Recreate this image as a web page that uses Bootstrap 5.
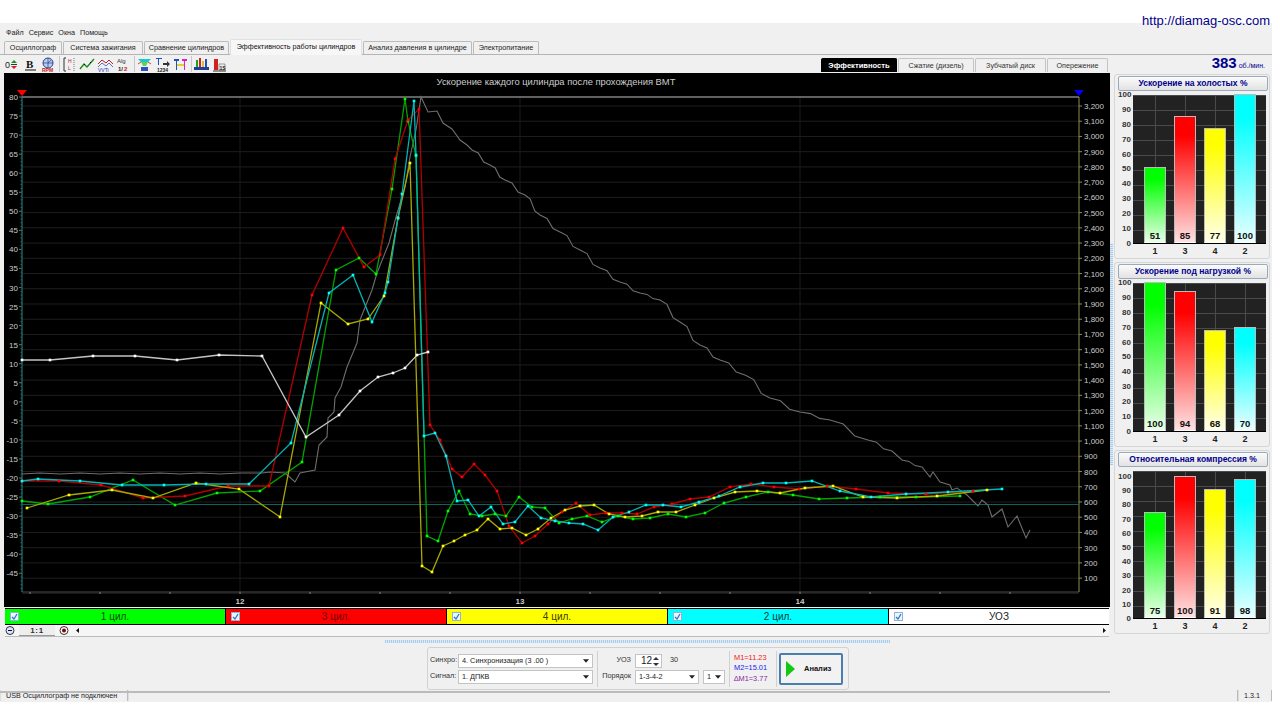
<!DOCTYPE html>
<html lang="ru">
<head>
<meta charset="UTF-8">
<title>Эффективность работы цилиндров</title>
<link href="https://cdn.jsdelivr.net/npm/bootstrap@5.3.3/dist/css/bootstrap.min.css" rel="stylesheet">
<style>
body { margin: 0; background: #fff; font-family: "Liberation Sans", Arial, sans-serif; font-size: 8px; color: #222; overflow: hidden; }
.app-frame { position: relative; width: 1272px; height: 679px; margin-top: 23px; background: #f0f0f0; }
.site-url { position: absolute; right: 2px; top: -10px; font-size: 13px; line-height: 16px; color: #00008b; text-decoration: none; }
.menu-row { height: 18px; padding: 5px 0 0 6px; font-size: 7.2px; line-height: 9px; gap: 5px; }
.app-tabs { height: 13px; padding-left: 4px; border: 0; gap: 1px; flex-wrap: nowrap; }
.app-tabs .nav-link { height: 13px; margin: 0; padding: 0; font-size: 7.2px; line-height: 12px; color: #222; text-align: center; white-space: nowrap; background: #f0f0f0; border: 1px solid #bbb; border-bottom: 0; border-radius: 2px 2px 0 0; }
.app-tabs .nav-link.active { height: 16px; margin-top: -2px; background: #f7f7f7; color: #111; line-height: 13px; position: relative; z-index: 1; }
.tool-row { height: 19px; border-top: 1px solid #b4b4b4; padding-left: 4px; }
.tool-ico { width: 17px; height: 17px; margin: 1px 1px 0 0; flex: none; }
.tool-gap { width: 1px; height: 16px; margin: 1px 1px; background: #c8c8c8; flex: none; }
.sub-tabs { position: absolute; left: 821px; top: 35px; gap: 1px; }
.sub-tab { height: 14px; font-size: 7.2px; line-height: 14px; text-align: center; background: #f0f0f0; border: 1px solid #c4c4c4; border-bottom: 0; border-radius: 2px 2px 0 0; color: #333; }
.sub-tab.on { background: #000; color: #fff; font-weight: 700; font-size: 7.6px; border-color: #000; }
.rpm-box { position: absolute; right: 7px; top: 31px; color: #00008b; font-size: 7px; line-height: 18px; white-space: nowrap; }
.rpm-box b { font-size: 15px; }
.work-row { height: 616px; }
.left-col { width: 1110px; padding-left: 4px; flex: none; }
.osc-box { height: 534px; background: #000; }
.osc-box svg { display: block; }
.osc-box text { font-family: "Liberation Sans", Arial, sans-serif; }
.legend-row { height: 17px; margin-top: 1px; margin-left: 1px; width: 1104px; gap: 1px; background: #000; }
.legend-cell { flex: 1 1 0; position: relative; height: 15px; margin-top: 1px; font-size: 10px; line-height: 15px; text-align: center; }
.legend-check { position: absolute; left: 5px; top: 3px; width: 9px; height: 9px; background: #eef5fc; border: 1px solid #8fb3d5; }
.legend-check svg { display: block; }
.scroll-row { height: 12px; background: #f6f6f6; border-bottom: 1px solid #bbb; margin-left: 1px; width: 1104px; }
.scale-btn { width: 10px; height: 11px; flex: none; }
.scale-val { width: 36px; font-size: 8px; line-height: 12px; text-align: center; font-weight: 700; background: #eee; border-bottom: 1px solid #999; color: #333; letter-spacing: .6px; }
.bottom-zone { height: 53px; position: relative; margin-left: -4px; border-bottom: 2px solid #bbb; }
.h-split { height: 3px; width: 505px; margin: 3px auto 0 385px; background: repeating-linear-gradient(90deg, #a9cbea 0 1px, #dcebf8 1px 2px); border: 0; }
.ctl-box { position: absolute; left: 427px; top: 7px; width: 422px; height: 43px; border: 1px solid #d2d2d2; border-radius: 3px; background: #f0f0f0; font-size: 7.3px; }
.ctl-label { color: #333; text-align: right; white-space: nowrap; }
.ctl-sel { height: 14px; padding: 0 12px 0 3px; font-size: 7.3px; line-height: 12px; border: 1px solid #c4c4c4; border-radius: 0; color: #222; background-color: #fff; background-image: url("data:image/svg+xml,%3csvg xmlns='http://www.w3.org/2000/svg' viewBox='0 0 7 4'%3e%3cpath d='M0 0h7L3.5 4z' fill='%23222'/%3e%3c/svg%3e"); background-position: right 3px center; background-size: 6px 4px; font-family: inherit; }
.ctl-left { padding-left: 2px; }
.sel-label { width: 26px; margin-right: 2px; }
.sel-wide { width: 135px; }
.sel-second { margin-top: 2px; }
.order-label { width: 29px; }
.order-sel { width: 64px; }
.num-sel { width: 22px; }
.uoz-val { color: #333; }
.ctl-div { width: 1px; height: 36px; background: #d0d0d0; flex: none; align-self: center; }
.spin-box { width: 27px; height: 14px; border: 1px solid #c4c4c4; background: #fff; font-size: 10px; line-height: 12px; padding-left: 5px; position: relative; }
.spin-box svg { position: absolute; right: 1px; top: 1px; }
.calc-vals { font-size: 7.4px; line-height: 10.5px; width: 42px; }
.text-m1 { color: #f01818; } .text-m2 { color: #2020f0; } .text-m3 { color: #8a1ea0; }
.run-btn { width: 64px; height: 32px; margin-left: 2px; padding: 0; border: 2px solid #4a7eaf; border-radius: 2px; background: #f2f2f2; font-size: 7.5px; font-weight: 700; color: #111; }
.run-ico { flex: none; margin-right: 3px; }
.v-split { width: 3px; height: 222px; margin-top: 170px; flex: none; background: repeating-linear-gradient(0deg, #a9cbea 0 1px, #dcebf8 1px 2px); }
.side-col { width: 158px; padding-top: 1px; margin-left: 1px; }
.gauge-card { width: 156px; padding: 1px 3px 0 3px; background: #f0f0f0; border: 1px solid #d6d6d6; border-radius: 3px; margin-bottom: 3px; }
.gauge-head { height: 15px; width: 150px; font-size: 8.5px; line-height: 13px; font-weight: 700; color: #00008b; text-align: center; background: linear-gradient(#fbfbfb, #e2e2e2); border: 1px solid #9ab; border-radius: 2px; padding: 0; }
.gauge-body { margin-top: 4px; }
.gauge-scale { width: 15px; font-weight: 700; color: #333; text-align: right; padding-right: 2px; margin-top: -5px; flex: none; }
.gauge-scale span { line-height: 10px; display: block; }
.gauge-plot { width: 134px; position: relative; padding-left: 7px; align-items: flex-end; background-color: #222; background-image: linear-gradient(#4a4a4a 1px, transparent 1px), linear-gradient(90deg, #4a4a4a 1px, transparent 1px); background-size: 100% 15px, 30px 100%; background-position: 0 0, 22px 0; border-bottom: 1px solid #000; }
.gauge-col { width: 30px; text-align: center; flex: none; }
.gauge-bar { width: 22px; margin: 0 auto; border: 1px solid #bbb; border-bottom-color: #fff; position: relative; font-size: 9.5px; font-weight: 700; color: #111; }
.gauge-bar span { position: absolute; left: 0; right: 0; bottom: 1px; line-height: 11px; }
.gauge-x { padding-left: 22px; height: 14px; font-size: 9px; line-height: 15px; font-weight: 700; color: #222; }
.gauge-x span { width: 30px; text-align: center; flex: none; }
.status-row { height: 11px; margin-top: 1px; font-size: 7.2px; line-height: 11px; background: #f0f0f0; }
.status-cell { border-right: 1px solid #bbb; border-left: 1px solid #ddd; padding-left: 5px; white-space: nowrap; }
.cell-a { width: 128px; } .cell-b { width: 1110px; }
.tab-w58 { width: 58px; } .tab-w80 { width: 80px; } .tab-w85 { width: 85px; } .tab-w132 { width: 132px; } .tab-w109 { width: 109px; } .tab-w66 { width: 66px; }
.tab-w76 { width: 76px; } .tab-w71 { width: 71px; } .tab-w61 { width: 61px; }
</style>
</head>
<body>
<div class="app-frame d-flex flex-column">
    <a class="site-url" href="#">http://diamag-osc.com</a>

    <div class="menu-row d-flex"><span>Файл</span><span>Сервис</span><span>Окна</span><span>Помощь</span></div>

    <ul class="nav nav-tabs app-tabs">
        <li class="nav-item"><a class="nav-link tab-w58" href="#">Осциллограф</a></li>
        <li class="nav-item"><a class="nav-link tab-w80" href="#">Система зажигания</a></li>
        <li class="nav-item"><a class="nav-link tab-w85" href="#">Сравнение цилиндров</a></li>
        <li class="nav-item"><a class="nav-link active tab-w132" href="#">Эффективность работы цилиндров</a></li>
        <li class="nav-item"><a class="nav-link tab-w109" href="#">Анализ давления в цилиндре</a></li>
        <li class="nav-item"><a class="nav-link tab-w66" href="#">Электропитание</a></li>
    </ul>

    <div class="tool-row d-flex">
        <svg class="tool-ico" viewBox="0 0 17 17"><text x="1" y="12" font-size="9" fill="#222">0</text><path d="M7 7l3-3 3 3z" fill="#2a8a2a"/><path d="M7 8h6v1H7z" fill="#333"/><path d="M7 10l3 3 3-3z" fill="#d02020"/></svg>
        <svg class="tool-ico" viewBox="0 0 17 17"><text x="4" y="12" font-size="11" font-weight="700" font-family="Liberation Serif" fill="#111">B</text><path d="M3 14h11" stroke="#111"/></svg>
        <svg class="tool-ico" viewBox="0 0 17 17"><circle cx="8" cy="7" r="5" fill="#b8cdea" stroke="#2b3f8c"/><path d="M8 7l3-3M3 7h10M8 2v10" stroke="#2b3f8c" stroke-width=".7"/><text x="2" y="16" font-size="5" font-weight="700" fill="#c02020">RPM</text></svg>
        <span class="tool-gap"></span>
        <svg class="tool-ico" viewBox="0 0 17 17"><path d="M5 2H3v13h2" fill="none" stroke="#333"/><text x="7" y="7" font-size="5" fill="#c02020">H</text><text x="7" y="14" font-size="5" fill="#c02020">L</text><path d="M13 2v13" stroke="#777" stroke-dasharray="1 1"/></svg>
        <svg class="tool-ico" viewBox="0 0 17 17"><path d="M1 13l4-5 3 3 7-8" fill="none" stroke="#1a8a1a" stroke-width="1.4"/><path d="M5 8h1v1H5zM11 6h1v1h-1z" fill="#111"/></svg>
        <svg class="tool-ico" viewBox="0 0 17 17"><path d="M1 8l4-4 4 3 3-3 4 4" fill="none" stroke="#c02020"/><path d="M1 11l4-4 4 3 3-3 4 4" fill="none" stroke="#2030c0" stroke-width=".7"/><text x="1" y="16" font-size="5" fill="#2030c0">VVTi</text></svg>
        <svg class="tool-ico" viewBox="0 0 17 17"><text x="2" y="7" font-size="6" fill="#333">Alg</text><text x="3" y="15" font-size="6" font-weight="700" fill="#222">1/</text><text x="9" y="15" font-size="6" font-weight="700" fill="#c02020">2</text></svg>
        <span class="tool-gap"></span>
        <svg class="tool-ico" viewBox="0 0 17 17"><path d="M2 3h13l-3 3H5z" fill="#19c8c8"/><path d="M5 6h7l-2 4H7z" fill="#5ad25a"/><path d="M5 11h7v4H5z" fill="#3050c0"/><path d="M2 8l3-2M15 8l-3-2" stroke="#d04040"/></svg>
        <svg class="tool-ico" viewBox="0 0 17 17"><path d="M2 2h6v1H5v6H4V3H2z" fill="#2050c0"/><path d="M9 7h4V5l3 3-3 3V9H9z" fill="#333"/><text x="3" y="16" font-size="5" font-weight="700" fill="#222">1234</text></svg>
        <svg class="tool-ico" viewBox="0 0 17 17"><path d="M2 3h5v2H5v9H4V5H2z" fill="#2050c0"/><path d="M10 3h5v2h-2v9h-1V5h-2z" fill="#e020c0"/><path d="M5 8h7v2H5z" fill="#e8d020"/></svg>
        <span class="tool-gap"></span>
        <svg class="tool-ico" viewBox="0 0 17 17"><path d="M3 4h2v7H3z" fill="#20a020"/><path d="M6 2h2v9H6z" fill="#d02020"/><path d="M9 5h2v6H9z" fill="#e0c020"/><path d="M12 3h2v8h-2z" fill="#2050c0"/><path d="M1 11h15v3H1z" fill="#2040a0"/></svg>
        <svg class="tool-ico" viewBox="0 0 17 17"><path d="M3 3h4v11H3z" fill="#d02020"/><path d="M8 8h6v6H8z" fill="#eee" stroke="#444" stroke-width=".5"/><text x="8.5" y="13.5" font-size="5" font-weight="700" fill="#222">1S</text><path d="M2 15h13" stroke="#333"/></svg>
    </div>

    <div class="sub-tabs d-flex">
        <div class="sub-tab on tab-w76">Эффективность</div>
        <div class="sub-tab tab-w76">Сжатие (дизель)</div>
        <div class="sub-tab tab-w71">Зубчатый диск</div>
        <div class="sub-tab tab-w61">Опережение</div>
    </div>
    <div class="rpm-box"><b>383</b> об./мин.</div>

    <div class="work-row d-flex">
        <div class="left-col">
            <div class="osc-box"><svg id="oscChart" width="1106" height="534" viewBox="4 73 1106 534"></svg></div>

            <div class="legend-row d-flex" id="legendRow"></div>

            <div class="scroll-row d-flex">
                <svg class="scale-btn" viewBox="0 0 10 11"><circle cx="5" cy="5.5" r="4" fill="#dfe6f2" stroke="#333"/><path d="M3 5h4v1H3z" fill="#00008b"/></svg>
                <div class="scale-val mx-1">1:1</div>
                <svg class="scale-btn" viewBox="0 0 10 11"><circle cx="5" cy="5.5" r="4" fill="#fff" stroke="#333"/><circle cx="5" cy="5.5" r="2" fill="#8b0000"/></svg>
                <svg class="scale-btn ms-1" viewBox="0 0 10 11"><path d="M6 3v5L3 5.5z" fill="#111"/></svg>
                <div class="flex-grow-1"></div>
                <svg class="scale-btn" viewBox="0 0 10 11"><path d="M4 3v5l3-2.5z" fill="#111"/></svg>
            </div>

            <div class="bottom-zone">
                <div class="h-split"></div>
                <div class="ctl-box d-flex align-items-center">
                    <div class="d-flex flex-column ctl-left">
                        <div class="d-flex align-items-center">
                            <span class="ctl-label sel-label">Синхро:</span>
                            <select class="form-select ctl-sel sel-wide"><option>4.  Синхронизация (3 .00 )</option></select>
                        </div>
                        <div class="d-flex align-items-center sel-second">
                            <span class="ctl-label sel-label">Сигнал:</span>
                            <select class="form-select ctl-sel sel-wide"><option>1.  ДПКВ</option></select>
                        </div>
                    </div>
                    <span class="ctl-div mx-1"></span>
                    <div class="d-flex flex-column">
                        <div class="d-flex align-items-center">
                            <span class="ctl-label order-label">УОЗ</span>
                            <div class="spin-box ms-1">12<svg width="8" height="11" viewBox="0 0 8 11"><path d="M1 4l3-3 3 3zM1 7l3 3 3-3z" fill="#333"/></svg></div>
                            <span class="ms-2 uoz-val">30</span>
                        </div>
                        <div class="d-flex align-items-center sel-second">
                            <span class="ctl-label order-label">Порядок</span>
                            <select class="form-select ctl-sel order-sel ms-1"><option>1-3-4-2</option></select>
                            <select class="form-select ctl-sel num-sel ms-1"><option>1</option></select>
                        </div>
                    </div>
                    <span class="ctl-div mx-1"></span>
                    <div class="calc-vals">
                        <div class="text-m1">M1=11.23</div>
                        <div class="text-m2">M2=15.01</div>
                        <div class="text-m3">&#8710;M1=3.77</div>
                    </div>
                    <span class="ctl-div"></span>
                    <button class="btn run-btn d-flex align-items-center" type="button">
                        <svg class="run-ico" width="20" height="24" viewBox="0 0 20 24"><path d="M5 4l9 8-9 8z" fill="#12c812"/></svg>
                        <span>Анализ</span>
                    </button>
                </div>
            </div>
        </div>
        <div class="v-split"></div>
        <div class="side-col" id="sideCol"></div>
    </div>

    <div class="status-row d-flex">
        <div class="status-cell cell-a">USB Осциллограф не подключен</div>
        <div class="status-cell cell-b"></div>
        <div class="status-cell flex-grow-1">1.3.1</div>
    </div>
</div>

<script>
    // координаты точек в пикселях экрана
    const series = [
        { line: "#00a400", dot: "#00ff00", pts: [22,501,48,504,90,497,133,480,175,505,217,493,260,491,302,462,336,270,359,258,376,274,392,189,405,99,408,121,416,156,427,536,438,541,448,511,459,491,470,514,482,516,495,514,506,516,519,497,532,507,545,508,559,523,572,519,587,516,602,522,618,516,633,519,650,518,668,514,686,517,705,513,724,503,746,497,768,492,793,495,819,499,847,498,880,497,916,497,960,496] },
        { line: "#b00000", dot: "#ff0000", pts: [22,481,59,481,101,485,143,498,185,496,228,486,269,486,312,295,343,228,364,267,380,255,395,159,408,120,419,109,430,425,440,440,452,469,462,477,474,464,485,475,497,491,509,526,522,543,535,536,548,524,562,512,576,503,590,515,606,513,622,513,637,514,654,507,672,504,690,499,709,497,730,487,751,484,774,487,799,489,827,486,856,489,888,493,926,494,973,491] },
        { line: "#a8a800", dot: "#ffff00", pts: [27,508,69,495,112,490,153,498,196,483,239,489,280,517,321,303,348,324,368,319,384,296,398,218,410,163,422,566,432,572,443,546,454,541,465,535,477,530,488,519,500,529,512,528,526,535,538,529,551,518,565,510,580,506,594,505,609,514,625,517,642,516,658,512,676,512,695,505,714,498,735,492,757,491,780,493,805,488,833,486,863,497,897,498,937,496,987,490] },
        { line: "#00b4b4", dot: "#00ffff", pts: [22,481,38,479,80,481,122,485,164,485,206,484,249,484,291,443,329,293,353,275,372,322,385,293,388,282,398,218,402,194,414,101,416,155,424,436,435,433,446,456,457,501,468,500,479,516,491,507,503,524,515,522,528,506,541,518,555,521,569,523,583,524,598,530,613,517,629,512,646,505,663,505,681,507,699,502,719,496,740,487,763,483,786,483,812,481,840,491,871,497,906,494,948,492,1002,489] },
        { line: "#c4c4c4", dot: "#ffffff", pts: [22,360,50,360,93,356,135,356,177,360,219,355,262,356,306,437,339,415,360,391,378,377,393,373,405,368,417,355,428,352] }
    ];
    const rpmBase = [22,474,40,473,60,474,80,473,100,474,120,473,140,474,160,473,180,474,200,473,220,474,240,473,262,473,270,472,285,473,295,482,300,473,315,470,319,445,327,437,328,418,334,412,335,398,341,387,347,367,357,343,360,320,372,290,377,273,389,243,396,217,405,187,410,157,416,130,421,97,428,112,437,111,443,123,452,129,460,140,467,145,472,150,490,165,505,180,525,195,540,215,560,232,580,250,600,268,620,282,640,293,660,300,680,322,700,345,720,360,745,375,770,398,800,412,830,420,868,440,892,451,902,460,922,467,930,477,933,472,940,482,950,485,952,490,957,488,967,495,978,506,982,500,988,505,992,517,1002,509,1008,527,1017,516,1026,538,1030,530];

    // на спаде кривая оборотов неровная: добавляем мелкие ступеньки
    const rpmLine = [];
    for (let i = 0; i < rpmBase.length - 2; i += 2) {
        const x1 = rpmBase[i], y1 = rpmBase[i + 1], x2 = rpmBase[i + 2], y2 = rpmBase[i + 3];
        rpmLine.push(x1, y1);
        if (x1 >= 467 && x2 - x1 > 12) {
            rpmLine.push(x1 + (x2 - x1) * .35, y1 + (y2 - y1) * .2, x1 + (x2 - x1) * .65, y1 + (y2 - y1) * .8);
        }
    }
    rpmLine.push(1030, 530);

    function poly(arr, color, width) {
        let p = "";
        for (let i = 0; i < arr.length; i += 2) p += arr[i] + "," + arr[i + 1] + " ";
        return `<polyline points="${p}" fill="none" stroke="${color}" stroke-width="${width}"/>`;
    }

    let svg = "";
    const plotL = 22, plotR = 1079, plotT = 97, plotB = 592;

    // сетка
    for (let i = 0; i <= 32; i++) {
        const y = 106 + i * 15.23;
        svg += `<path d="M${plotL} ${y}H${plotR}" stroke="#1e1e1e"/>`;
    }
    [240, 520, 800].forEach(x => { svg += `<path d="M${x} ${plotT}V${plotB}" stroke="#1a1a1a"/>`; });

    // оси
    svg += `<path d="M${plotL} ${plotT}H${plotR}" stroke="#808080" stroke-width="1.5"/>`;
    svg += `<path d="M${plotL} ${plotB}H${plotR}" stroke="#4c4c4c"/>`;
    svg += `<path d="M${plotL} ${plotT}V${plotB}" stroke="#2a8c8c"/>`;
    svg += `<path d="M${plotR} ${plotT}V${plotB}" stroke="#8c8c50"/>`;
    for (let x = 30; x < plotR; x += 70) svg += `<path d="M${x} ${plotB}v2" stroke="#888"/>`;

    for (let v = 80; v >= -45; v -= 5) {
        const y = 97 + (80 - v) * 3.81;
        svg += `<path d="M19 ${y}h3" stroke="#2a8c8c"/>`;
        svg += `<text x="18" y="${y + 3}" font-size="8" fill="#ccc" text-anchor="end">${v}</text>`;
    }
    for (let y = 97; y < plotB; y += 3.81) svg += `<path d="M20.5 ${y}h1.5" stroke="#1f6a6a"/>`;
    for (let r = 3200; r >= 100; r -= 100) {
        const y = 106 + (3200 - r) * 0.1523;
        const label = r >= 1000 ? Math.floor(r / 1000) + "," + String(r % 1000).padStart(3, "0") : r;
        svg += `<path d="M${plotR} ${y}h3" stroke="#8c8c50"/>`;
        svg += `<text x="1084" y="${y + 3}" font-size="8" fill="#ccc">${label}</text>`;
    }
    [[240, 12], [520, 13], [800, 14]].forEach(t => {
        svg += `<text x="${t[0]}" y="604" font-size="8" font-weight="700" fill="#ccc" text-anchor="middle">${t[1]}</text>`;
    });

    svg += `<text x="556" y="85" font-size="9.4" fill="#ccc" text-anchor="middle">Ускорение каждого цилиндра после прохождения ВМТ</text>`;
    svg += `<path d="M17 90h10l-5 6z" fill="#f00"/><path d="M1074 90h10l-5 6z" fill="#00f"/>`;

    svg += `<path d="M${plotL} 504.5H${plotR}" stroke="#0a6464"/>`;
    svg += poly(rpmLine, "#6e6e6e", 1.1);

    series.forEach(s => { svg += poly(s.pts, s.line, 1.3); });
    series.forEach(s => {
        for (let i = 0; i < s.pts.length; i += 2) {
            svg += `<rect x="${s.pts[i] - 1.3}" y="${s.pts[i + 1] - 1.3}" width="2.6" height="2.6" fill="${s.dot}"/>`;
        }
    });
    document.getElementById("oscChart").innerHTML = svg;

    // легенда
    const legend = [["1 цил.", "#00ff00", "#005000"], ["3 цил.", "#ff0000", "#700000"], ["4 цил.", "#ffff00", "#404000"], ["2 цил.", "#00ffff", "#004040"], ["УОЗ", "#ffffff", "#222222"]];
    document.getElementById("legendRow").innerHTML = legend.map(l =>
        `<div class="legend-cell" style="background:${l[1]};color:${l[2]}"><span class="legend-check"><svg width="7" height="7" viewBox="0 0 7 7"><path d="M1 4l2 2 3-5" fill="none" stroke="#2a7ad0" stroke-width="1.3"/></svg></span>${l[0]}</div>`
    ).join("");

    // правая панель
    const gauges = [
        { title: "Ускорение на холостых %", vals: [51, 85, 77, 100], step: 1.49, top: 0, h: 149 },
        { title: "Ускорение под нагрузкой %", vals: [100, 94, 68, 70], step: 1.49, top: 0, h: 149 },
        { title: "Относительная компрессия %", vals: [75, 100, 91, 98], step: 1.42, top: 6, h: 148 }
    ];
    const colors = ["#00ff00", "#ff0000", "#ffff00", "#00ffff"];
    const tops = ["#e8ffe8", "#ffe0e0", "#ffffe8", "#e8ffff"];
    const names = [1, 3, 4, 2];
    document.getElementById("sideCol").innerHTML = gauges.map(g => {
        let scale = "";
        for (let v = 100; v >= 0; v -= 10) scale += `<span style="height:${g.step * 10}px">${v}</span>`;
        const cols = g.vals.map((v, i) =>
            `<div class="gauge-col"><div class="gauge-bar" style="height:${v * g.step}px;background:linear-gradient(${colors[i]} 15%, ${tops[i]})"><span>${v}</span></div></div>`
        ).join("");
        const xs = names.map(n => `<span>${n}</span>`).join("");
        return `<div class="gauge-card">
            <div class="gauge-head">${g.title}</div>
            <div class="gauge-body d-flex" style="height:${g.h}px">
                <div class="gauge-scale" style="padding-top:${g.top}px">${scale}</div>
                <div class="gauge-plot d-flex">${cols}</div>
            </div>
            <div class="gauge-x d-flex">${xs}</div>
        </div>`;
    }).join("");
</script>
<script src="https://cdn.jsdelivr.net/npm/bootstrap@5.3.3/dist/js/bootstrap.bundle.min.js"></script>
</body>
</html>
